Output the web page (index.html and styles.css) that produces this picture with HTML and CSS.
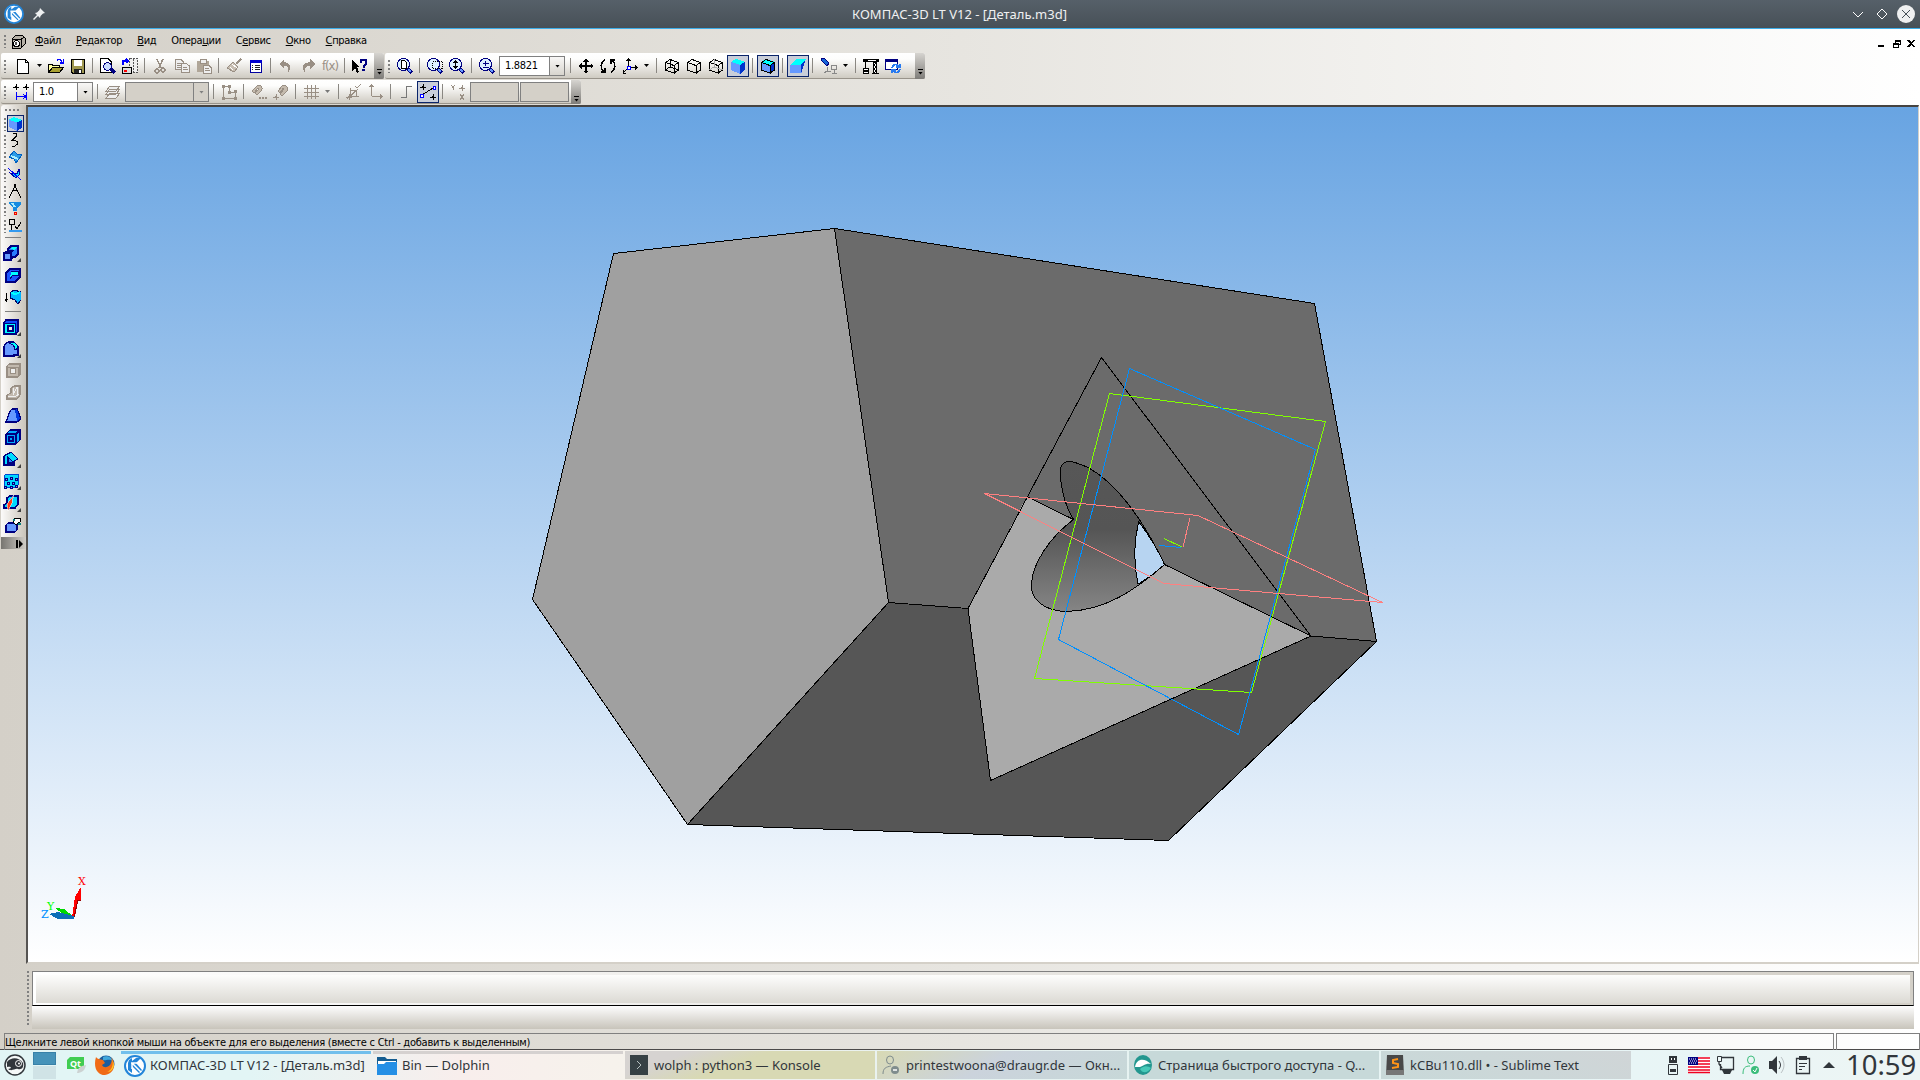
FILE: index.html
```html
<!DOCTYPE html>
<html lang="ru">
<head>
    <meta charset="UTF-8">
    <title>КОМПАС-3D LT V12 - [Деталь.m3d]</title>
    <link rel="stylesheet" href="styles.css">
</head>
<body>
    <svg class="sprite">
        <symbol id="kompas" viewBox="0 0 22 22"><circle cx="11" cy="11" r="10" fill="#fff" stroke="#2385d9" stroke-width="2"/><path d="M5 5L8 3V6L12 3H17L12 8L18 15L15 18L8 11V18L4 15V8Z" fill="#2385d9"/><path d="M7 8H13M8 8V14M8 8L17 17" stroke="#fff" stroke-width="1.500"/></symbol>
        <symbol id="cube" viewBox="0 0 16 16"><path d="M1 4L10 7V16L1 12Z" fill="#6699ff"/><path d="M1 4L6 1L15 4L10 7Z" fill="#00ffff"/><path d="M15 4V12L10 16V7Z" fill="#0033cc"/></symbol>
        <symbol id="lens" viewBox="0 0 16 16"><path d="M10 10L15 15" stroke="#000080" stroke-width="4"/><path d="M11 11L14 14" stroke="#6699ff" stroke-width="2"/><circle cx="6.500" cy="6.500" r="6" fill="#dcf0ff" stroke="#000080" stroke-width="1.200"/></symbol>
        <symbol id="wire" viewBox="0 0 16 16"><path d="M1.5 4.5L10 7.5V15L1.5 12ZM1.5 4.5L6 1.5L14.5 4.5L10 7.5M14.5 4.5V12L10 15" fill="none" stroke="#000" stroke-width="1"/></symbol>
        <symbol id="cross" viewBox="0 0 6 6"><path d="M3 0V6M0 3H6" stroke="currentColor"/><circle cx="3" cy="3" r="1.500" fill="currentColor"/></symbol>
    </svg>

    <div class="titlebar">
        <div class="title-left">
            <svg width="20" height="20"><use href="#kompas"/></svg>
            <svg width="12" height="12" viewBox="0 0 12 12"><path d="M7 0L12 5L10 5.500L7.500 8L7 10L5 8L1 12L0 11L4 7L2 5L4 4.500L6.500 2Z" fill="#eef0f1"/></svg>
        </div>
        <div class="title-text">КОМПАС-3D LT V12 - [Деталь.m3d]</div>
        <div class="title-right">
            <svg width="12" height="18" viewBox="0 0 12 18"><path d="M1 7L6 12L11 7" fill="none" stroke="#fcfcfc"/></svg>
            <svg width="12" height="18" viewBox="0 0 12 18"><path d="M6 4L11 9L6 14L1 9Z" fill="none" stroke="#fcfcfc"/></svg>
            <svg width="18" height="18" viewBox="0 0 18 18"><circle cx="9" cy="9" r="9" fill="#eff0f1"/><path d="M5 5L13 13M13 5L5 13" stroke="#475057"/></svg>
        </div>
    </div>

    <div class="app">
        <div class="menubar">
            <i class="grip"></i>
            <svg class="px" width="15" height="15" viewBox="0 0 15 15"><path d="M1 5L5 1H11L14 4V10L10 14H1Z" fill="#b5b0a6" stroke="#000"/><path d="M1 5H10V14M10 5L14 3" fill="none" stroke="#000"/><circle cx="5.500" cy="9.500" r="3" fill="#fff" stroke="#000"/><path d="M4 8H6V11H4Z" fill="#555"/></svg>
            <div class="menus">
                <span><u>Ф</u>айл</span><span><u>Р</u>едактор</span><span><u>В</u>ид</span><span>Опера<u>ц</u>ии</span><span>С<u>е</u>рвис</span><span><u>О</u>кно</span><span><u>С</u>правка</span>
            </div>
            <svg class="mdi px" width="38" height="10" viewBox="0 0 38 10"><path d="M0 6H6V8H0Z"/><path d="M17.500 1.500H22.500V5.500H17.500ZM15.500 4.500H20.500V8.500H15.500Z" fill="#fff" stroke="#000"/><path d="M17 1H23V3H17ZM15 4H21V6H15Z"/><path d="M30 1L36.500 8M36.500 1L30 8" stroke="#000" stroke-width="1.700"/></svg>
        </div>

        <div class="toolrow">
            <div class="toolbar">
                <i class="grip"></i>
                <b class="btn"><svg viewBox="0 0 16 16"><path d="M2.500 1.500H10.500L13.500 4.500V15.500H2.500Z" fill="#fff" stroke="#000"/><path d="M10.500 1.500V4.500H13.500" fill="none" stroke="#000"/></svg></b>
                <i class="arr"></i>
                <b class="btn"><svg viewBox="0 0 16 16"><path d="M.5 14.500V6.500H4L5 7.500H11.500V9.500" fill="#ffffa0" stroke="#000"/><path d="M.5 14.500L4.500 9.500H15.500L11.500 14.500Z" fill="#a8a030" stroke="#000"/><path d="M9 3C10 1 13 1 14 4M15.500 1V5H12" fill="none" stroke="#0000ff" stroke-width="1.300"/></svg></b>
                <b class="btn"><svg viewBox="0 0 16 16"><path d="M1.500 1.500H14.500V15.500H3L1.500 14Z" fill="#a09850" stroke="#000"/><path d="M4 2H12V8H4Z" fill="#fff"/><path d="M4 11H12V15H4Z" fill="#222"/><path d="M9 12H11V15H9Z" fill="#fff"/></svg></b>
                <i class="sep"></i>
                <b class="btn"><svg viewBox="0 0 16 16"><path d="M.5 .5H8L11.500 4V14.500H.5Z" fill="#fff" stroke="#000"/><path d="M10 10L15 15" stroke="#000080" stroke-width="3"/><circle cx="7.500" cy="8.500" r="3.800" fill="#cdf" stroke="#000080"/></svg></b>
                <b class="btn"><svg viewBox="0 0 16 16"><path d="M7.500 .5H15.500V14H7.500ZM11.500 1V14" fill="#eee" stroke="#555" stroke-dasharray="2 1"/><path d="M1 7V3H6M4 1L6 3L4 5" fill="none" stroke="#0000ff" stroke-width="1.500"/><path d="M.5 9.500H9.500V15.500H.5Z" fill="#ddd" stroke="#000"/><path d="M2 13H5" stroke="red" stroke-width="2"/></svg></b>
                <i class="sep"></i>
                <b class="btn off"><svg viewBox="0 0 16 16"><path d="M5 1L9 10M11 1L7 10" stroke="currentColor" stroke-width="1.500"/><circle cx="5" cy="13" r="2" fill="none" stroke="currentColor" stroke-width="1.500"/><circle cx="11" cy="12" r="2" fill="none" stroke="currentColor" stroke-width="1.500"/></svg></b>
                <b class="btn off"><svg viewBox="0 0 16 16"><path d="M1.500 1.500H7L9.500 4V11.500H1.500ZM3 5H7M3 7H8M3 9H7" fill="#eee" stroke="currentColor"/><path d="M7.500 5.500H12.500L15.500 8V14.500H7.500ZM9 9H13M9 11H14" fill="#eee" stroke="currentColor"/></svg></b>
                <b class="btn off"><svg viewBox="0 0 16 16"><path d="M1 3H13V14H1Z" fill="#b0a698"/><path d="M4 1H10V5H4Z" fill="#eee" stroke="currentColor"/><path d="M7.500 7.500H13L15.500 10V15.500H7.500ZM9 10H13M9 12H14" fill="#eee" stroke="currentColor"/></svg></b>
                <i class="sep"></i>
                <b class="btn off"><svg viewBox="0 0 16 16"><path d="M15 1L10 6" stroke="currentColor" stroke-width="2"/><path d="M7 4L12 9L8 14L1 10Z" fill="#c8beb2" stroke="currentColor"/><path d="M6 6L11 10M4 9L7 12" stroke="#fff"/></svg></b>
                <b class="btn"><svg viewBox="0 0 16 16"><path d="M2.500 2.500H13.500V14.500H2.500Z" fill="#fff" stroke="#0000a0"/><path d="M2 2H14V5H2Z" fill="#0000d0"/><path d="M4 7.500H5M4 9.500H5M4 11.500H5M7 7.500H12M7 9.500H12M7 11.500H12" stroke="#222"/></svg></b>
                <i class="sep"></i>
                <b class="btn off"><svg viewBox="0 0 16 16"><path d="M1 6L6 1V4C12 4 15 9 10 15C11 10 10 8 6 8V11Z" fill="currentColor"/></svg></b>
                <b class="btn off"><svg viewBox="0 0 16 16"><path d="M15 6L10 1V4C4 4 0 9 5 15C4 10 6 8 10 8V11Z" fill="currentColor"/></svg></b>
                <b class="btn off fx">f(x)</b>
                <i class="sep"></i>
                <b class="btn"><svg viewBox="0 0 16 16"><path d="M0 2V13L3 10L5 15L7 14L5 9H8Z"/><path d="M9 5V2H14V6L11.500 8V10" fill="none" stroke="#000080" stroke-width="2"/><path d="M10 11H13V13H10Z" fill="#000080"/></svg></b>
                <i class="more"></i>
            </div>
            <div class="toolbar view">
                <i class="grip"></i>
                <b class="btn"><svg viewBox="0 0 16 16"><use href="#lens"/><path d="M4.500 2.500H7.500L9.500 4.500V10.500H4.500Z" fill="#fff" stroke="#000"/></svg></b>
                <i class="sep"></i>
                <b class="btn"><svg viewBox="0 0 16 16"><use href="#lens"/><path d="M5.500 3.500H15.500V10.500H5.500Z" fill="none" stroke="#000" stroke-dasharray="1 1"/></svg></b>
                <b class="btn"><svg viewBox="0 0 16 16"><use href="#lens"/><path d="M6.500 2L9.500 5H3.500ZM6.500 11L9.500 8H3.500Z"/><path d="M6.500 4V10" stroke="#000" stroke-width="1"/></svg></b>
                <i class="sep"></i>
                <b class="btn"><svg viewBox="0 0 16 16"><use href="#lens"/><path d="M4 5.500H10M6.500 3V8M4 9.500H10" stroke="#000080" stroke-width="1"/></svg></b>
                <div class="combo zoomval"><span>1.8821</span><i></i></div>
                <i class="sep"></i>
                <b class="btn"><svg viewBox="0 0 16 16"><path d="M8 2V14M2 8H14" stroke="#000" stroke-width="1.500"/><path d="M8 0L11 3.500H5ZM8 16L11 12.500H5ZM0 8L3.500 5V11ZM16 8L12.500 5V11Z"/></svg></b>
                <b class="btn"><svg viewBox="0 0 16 16"><path d="M5 2C0 5 0 10 4 14M11 14C16 11 16 6 12 2M1 14H5V10M15 2H11V6" fill="none" stroke="#000" stroke-width="1.500"/></svg></b>
                <b class="btn"><svg viewBox="0 0 16 16"><path d="M6.500 9V1M7 9.500H15M6 10L1 15M4.500 3L6.500 1L8.500 3M13 7.500L15 9.500L13 11.500M1 12V15H4" fill="none" stroke="#000"/><path d="M5 8H8V11H5Z" fill="#fff" stroke="#00f"/></svg></b>
                <i class="arr"></i>
                <i class="sep"></i>
                <b class="btn"><svg viewBox="0 0 16 16"><use href="#wire"/><path d="M6 1V9L1 12M6 9L15 12" fill="none" stroke="#000"/></svg></b>
                <b class="btn"><svg viewBox="0 0 16 16"><use href="#wire"/></svg></b>
                <b class="btn"><svg viewBox="0 0 16 16"><use href="#wire"/><path d="M6 1V9L1 12M6 9L15 12" fill="none" stroke="#aaa"/></svg></b>
                <b class="btn on"><svg viewBox="0 0 16 16"><use href="#cube"/></svg></b>
                <i class="sep"></i>
                <b class="btn on"><svg viewBox="0 0 16 16"><use href="#cube"/><use href="#wire"/></svg></b>
                <i class="sep"></i>
                <b class="btn on"><svg viewBox="0 0 16 16"><path d="M0 7H12V15H0Z" fill="#6699ff"/><path d="M0 7L7 1H16L11 7Z" fill="#00ffff"/><path d="M16 1L11 15V7Z" fill="#0033cc"/></svg></b>
                <i class="sep wide"></i>
                <b class="btn"><svg viewBox="0 0 16 16"><path d="M0 0H3L8 5L6 8L0 2Z" fill="#1565d8" stroke="#000080"/><path d="M6 13L3 15M6 9V13H10M10.500 7.500H15.500V11.500H10.500ZM13 12V15M11 15.500H16" fill="none" stroke="#888"/></svg></b>
                <i class="arr"></i>
                <i class="sep"></i>
                <b class="btn"><svg viewBox="0 0 16 16"><path d="M0 1H16V4H14V15H16V16H9V15H10V4H3V10H2V4H0Z"/><path d="M11 5L13 7L11 9L13 11L11 13L13 15M5 2L7 3L9 2L11 3L13 2" fill="none" stroke="#fff"/><path d="M0 10H6V16H0Z"/><path d="M1 11.500H5M1 14H5" stroke="#fff"/></svg></b>
                <b class="btn"><svg viewBox="0 0 16 16"><path d="M.5 1.500H12.500V11.500H.5Z" fill="#fff" stroke="#000080"/><path d="M0 1H13V4H0Z" fill="#000080"/><path d="M7 10C8 6 12 5 14 9M15 11C14 15 10 16 8 12M15 6V9H11M7 15V12H11" fill="none" stroke="#287af0" stroke-width="1.800"/></svg></b>
                <i class="more"></i>
            </div>
        </div>

        <div class="toolrow second">
            <div class="toolbar state">
                <i class="grip"></i>
                <b class="btn"><svg viewBox="0 0 16 16"><use href="#cross" x="0" y="0" width="6" height="6"/><use href="#cross" x="10" y="0" width="6" height="6"/><path d="M3.500 8V16M13.500 8V16M4 12.500H13M10 10L13 12.500L10 15" fill="none" stroke="#00f"/></svg></b>
                <div class="combo step"><span>1.0</span><i></i></div>
                <i class="sep"></i>
                <b class="btn off"><svg viewBox="0 0 16 16"><path d="M1 14L5 9H15L11 14ZM1 10L5 5H15L11 10ZM1 7L5 2H15L11 7Z" fill="#eee" stroke="currentColor"/></svg></b>
                <div class="combo layer off"><span></span><i></i></div>
                <i class="sep"></i>
                <b class="btn off"><svg viewBox="0 0 16 16"><path d="M2.500 2V14H14.500V8H8.500V2Z" fill="none" stroke="currentColor"/><path d="M1 1H4V4H1ZM7 1H10V4H7ZM13 6H16V9H13ZM1 13H4V16H1ZM13 13H16V16H13ZM7 7H10V10H7Z" fill="currentColor"/></svg></b>
                <i class="sep"></i>
                <b class="btn off"><svg viewBox="0 0 16 16"><path d="M1 7L6 2C9 0 13 3 10 7L6 11L4 9L8 5L7 4L3 9Z" fill="#c5bbae" stroke="currentColor"/><path d="M8 14H10M11 14H13M14 14H16" stroke="currentColor" stroke-width="2"/></svg></b>
                <b class="btn off"><svg viewBox="0 0 16 16"><path d="M5 7L9 2C12 0 17 4 14 7L9 12L7 10L11 5L10 4L7 9Z" fill="#c5bbae" stroke="currentColor"/><use href="#cross" x="0" y="10" width="6" height="6"/></svg></b>
                <i class="sep"></i>
                <b class="btn off"><svg viewBox="0 0 16 16"><path d="M4.500 1V15M8.500 1V15M12.500 1V15M1 4.500H16M1 8.500H16M1 12.500H16" stroke="currentColor"/></svg></b>
                <i class="arr off"></i>
                <i class="sep"></i>
                <b class="btn off"><svg viewBox="0 0 16 16"><path d="M4.500 4V12H13M1 15L12 5M4.500 6.500H10.500V12M9 2L11 4L15 0" fill="none" stroke="currentColor"/><use href="#cross" x="0" y="10" width="6" height="6"/></svg></b>
                <b class="btn off"><svg viewBox="0 0 16 16"><path d="M3.500 12V1M4 12.500H14M1.500 3L3.500 1L5.500 3M12 10.500L14 12.500L12 14.500" fill="none" stroke="currentColor"/></svg></b>
                <i class="sep"></i>
                <b class="btn"><svg viewBox="0 0 16 16"><path d="M3 13.500H8.500V2.500H14" fill="none" stroke="#777"/></svg></b>
                <b class="btn on"><svg viewBox="0 0 16 16"><use href="#cross" x="0" y="0" width="6" height="6"/><use href="#cross" x="10" y="10" width="6" height="6"/><path d="M2 11L13 4" stroke="#000"/><path d="M.5 10.500H3V13H.5ZM13 2.500H15.500V5H13Z" fill="#fff" stroke="#00f"/></svg></b>
                <i class="sep"></i>
                <b class="btn off"><svg viewBox="0 0 16 16"><path d="M1 1L3 3.500L5 1M3 3V6M10 10L14 16M14 10L10 16" fill="none" stroke="currentColor"/><use href="#cross" x="9" y="1" width="6" height="6"/></svg></b>
                <div class="coord"></div><div class="coord"></div>
                <i class="more"></i>
            </div>
        </div>

        <div class="workspace">
            <div class="side">
                <i class="hgrip"></i>
                <div class="page"><i class="grip"></i><b class="on"><svg viewBox="0 0 16 16"><use href="#cube"/></svg></b></div>
                <div class="page"><i class="grip"></i><b><svg viewBox="0 0 16 16"><path d="M6 1.500H9.500V4L5.500 8H7L10.500 9.500V12L7 14.500H5" fill="none" stroke="#000"/></svg></b></div>
                <div class="page"><i class="grip"></i><b><svg viewBox="0 0 16 16"><path d="M2 8L7 2L10 5L15 6L9 14L7 10Z" fill="#2b9ce8" stroke="#0060c0"/><path d="M4 7L11 10" stroke="#aef" stroke-width="2"/></svg></b></div>
                <div class="page"><i class="grip"></i><b><svg viewBox="0 0 16 16"><path d="M3 7L10 8L12 3V9L9 12Z" fill="#00e0ff" stroke="#00a"/><path d="M1 2L14 14" stroke="#00f"/></svg></b></div>
                <div class="page"><i class="grip"></i><b><svg viewBox="0 0 16 16"><path d="M8 3L2 15M8 3L14 15M5 9C7 7 9 7 11 9" fill="none" stroke="#000"/><path d="M7 1H9V5H7Z"/></svg></b></div>
                <div class="page"><i class="grip"></i><b><svg viewBox="0 0 16 16"><path d="M2 2H14V4L10 8V11H6V8L2 4Z" fill="#168be0"/><path d="M5 3L8 7" stroke="#aef" stroke-width="2"/><path d="M7 12H9V14H7Z" fill="#fc3" stroke="#e00"/></svg></b></div>
                <div class="page"><i class="grip"></i><b><svg viewBox="0 0 16 16"><path d="M2.500 2.500H7.500V7.500H2.500ZM4.500 8V13M8 9L10 12L14 5" fill="none" stroke="#000"/><path d="M2 13H15V15H2Z" fill="#39e"/></svg></b></div>
                <i class="hsep"></i>
                <b class="tool sub"><svg viewBox="0 0 16 16"><path d="M5 4L8 1H15V9L12 12H5Z" fill="#2a7cff" stroke="#000080" stroke-width="1.500"/><path d="M7 4L9 2H14L12 5Z" fill="#0ff"/><path d="M1 8H8V15H1ZM1 8L4 6H10L8 8M8 15L11 12" fill="#6699ff" stroke="#000080" stroke-width="1.300"/></svg></b>
                <b class="tool"><svg viewBox="0 0 16 16"><path d="M1 6L5 2H15V10L10 15H1Z" fill="#1d56ff" stroke="#000080" stroke-width="1.500"/><path d="M6 4H13V8H8L5 12" fill="#0ff" stroke="#000080"/></svg></b>
                <b class="tool"><svg viewBox="0 0 16 16"><path d="M1.500 4V12M0 10L1.500 12L3 10" fill="none" stroke="#000"/><path d="M5 4L9 1L16 3V11L13 15L10 11L5 9Z" fill="#00b4ff" stroke="#006"/><path d="M6 4L11 5L15 3" fill="none" stroke="#0ff" stroke-width="2"/></svg></b>
                <i class="hsep"></i>
                <b class="tool sub"><svg viewBox="0 0 16 16"><path d="M1 4L3 1H15V12L13 15H1Z" fill="#0a50ff" stroke="#000080" stroke-width="1.500"/><path d="M1.500 4.500H12.500V14.500H1.500Z" fill="#0ff" stroke="#000080"/><path d="M5 7H10V12H5Z" fill="#eee" stroke="#000080" stroke-width="1.500"/></svg></b>
                <b class="tool sub"><svg viewBox="0 0 16 16"><path d="M1 15V7C1 4 3 1 6 1H10L15 6V14H11V15Z" fill="#6699ff" stroke="#000080" stroke-width="1.500"/><path d="M6 3C10 2 12 6 12 9L15 7C14 3 12 1 9 1Z" fill="#0ff" stroke="#000080"/></svg></b>
                <b class="tool off"><svg viewBox="0 0 16 16"><path d="M2 3L4 1H15V12L13 14H2Z" fill="#c2b9ae" stroke="currentColor" stroke-width="1.300"/><circle cx="8" cy="8" r="3" fill="#eee" stroke="currentColor"/><path d="M3 4H13V14" fill="none" stroke="currentColor"/></svg></b>
                <b class="tool off"><svg viewBox="0 0 16 16"><path d="M2 10L6 8V3L9 1H15V10L12 14H2Z" fill="#c2b9ae" stroke="currentColor" stroke-width="1.300"/><path d="M8 3V10L12 2V9M3 11H11L14 9" fill="none" stroke="#eee"/></svg></b>
                <b class="tool"><svg viewBox="0 0 16 16"><path d="M1 15L5 4L7 2H12L16 12L12 15Z" fill="#6699ff" stroke="#000080" stroke-width="1.300"/><path d="M10 3L12 14L15 12L12 2Z" fill="#0038dd"/></svg></b>
                <b class="tool"><svg viewBox="0 0 16 16"><path d="M1 5L5 1H15V11L11 15H1Z" fill="#0af" stroke="#000080" stroke-width="1.300"/><path d="M1 5H11V15M11 5L15 1M4 8H8V12H4Z" fill="none" stroke="#000080" stroke-width="1.500"/></svg></b>
                <b class="tool sub"><svg viewBox="0 0 16 16"><path d="M1 5L8 1L15 8L11 10V14H1Z" fill="#0df" stroke="#000080" stroke-width="1.300"/><path d="M5 6L11 12H5Z" fill="#258aff" stroke="#000080" stroke-width="1.300"/></svg></b>
                <b class="tool sub"><svg viewBox="0 0 16 16"><path d="M1 3L3 1H15V12L13 14H1Z" fill="#00d8ff" stroke="#0048d0"/><path d="M2 5H4V7H2ZM7 4H9V6H7ZM12 5H14V7H12ZM4 9H6V11H4ZM9 9H11V11H9ZM1 13H3V15H1ZM7 13H9V15H7ZM12 12H14V14H12Z" fill="#6699ff" stroke="#000080"/></svg></b>
                <b class="tool sub"><svg viewBox="0 0 16 16"><path d="M1 10L4 8V3L7 1H15V9L12 13H1Z" fill="#00d8ff" stroke="#000080" stroke-width="1.500"/><path d="M11 0L4 9L5 16L9 8V5Z" fill="#ff3b18" stroke="#fff" stroke-width=".5"/></svg></b>
                <b class="tool"><svg viewBox="0 0 16 16"><path d="M1 8L3 6H12V13L10 15H1Z" fill="#6699ff" stroke="#000080" stroke-width="1.300"/><path d="M8 5L10 1H15V5L11 8Z" fill="#fff" stroke="#000"/><path d="M8 3H10M13 7H16" stroke="#088080" stroke-width="2"/></svg></b>
                <i class="sidemore"><svg width="8" height="8"><path d="M0 0H2V8H0ZM3 0L7 4L3 8Z"/></svg></i>
            </div>

            <div class="viewport">
                <svg viewBox="28 107 1890 855" width="1890" height="855">
                    <defs>
                        <linearGradient id="bore" x1="0" y1="0" x2="0" y2="1"><stop offset="0" stop-color="#575757"/><stop offset=".45" stop-color="#555"/><stop offset="1" stop-color="#858585"/></linearGradient>
                    </defs>
                    <g class="edges" stroke="#000" stroke-linejoin="round">
                        <path d="M613.500 253.500L834.500 228.500L888.500 602.500L687.500 824.500L532.500 599.500Z" fill="#a0a0a0"/>
                        <path d="M834.500 228.500L1314.500 303.500L1376.500 641.500L1311 636L968 608.500L888.500 602.500Z" fill="#6b6b6b"/>
                        <path d="M888.500 602.500L968 608.500L990.500 780.500L1311 636L1376.500 641.500L1168.500 840.500L687.500 824.500Z" fill="#565656"/>
                        <path d="M968 608.500L1026.700 496.500L1073.500 519.500L1164.500 564.500L1311 636L990.500 780.500Z" fill="#aaa" stroke="none"/>
                        <path d="M1073.500 519.500L1164.500 564.500C1143 519 1116 483 1089 468C1070 459 1063 460 1060.500 468C1060 486 1063 502 1073.500 519.500Z" fill="#6b6b6b" stroke="none"/>
                        <path d="M1073.500 519.500C1063 502 1060 486 1060.500 468C1063 460 1070 459 1089 468C1116 483 1143 519 1164.500 564.500C1136 590 1104 611 1066 611.500C1043 611 1030 598 1031.500 584C1032 564 1050 537 1073.500 519.500Z" fill="url(#bore)"/>
                        <path d="M1138.700 521.500C1133 545 1134 566 1138 584C1147 579 1155 573 1164.500 564.500C1157 547 1148 534 1138.700 521.500Z" fill="#b7d4f1"/>
                        <path d="M1026.700 496.500L1073.500 519.500M1164.500 564.500L1311 636L990.500 780.500L968 608.500L1101.500 357.500L1311 636" fill="none"/>
                    </g>
                    <g class="edges" fill="none">
                        <path d="M1109.500 393.500L1325.500 421.500L1251.500 692.500L1034.500 678.500Z" stroke="#80ff00"/>
                        <path d="M1129.500 368.500L1315.500 449.500L1238.500 734.500L1058.500 639.500Z" stroke="#0090ff"/>
                        <path d="M984.500 493.500L1198 515.500L1382.500 602.500L1164 583.500ZM1190 518L1183 547" stroke="#ff8080"/>
                        <path d="M1164 538.500L1182 547" stroke="#80ff00"/>
                        <path d="M1159 545.500L1181 547.500" stroke="#0090ff"/>
                    </g>
                    <g class="triad">
                        <path d="M72 917L75 897L81 887V900L78 900L75 917Z" fill="#f00"/><path d="M74 917L78 900H81" stroke="#900" fill="none"/>
                        <path d="M73 916L62 913L55 908L64 909Z" fill="#00d800"/>
                        <path d="M49 914L58 912L74 916V919L58 919Z" fill="#0d6eb8"/>
                        <text x="78" y="885" fill="#f00">X</text>
                        <text x="47" y="910" fill="#0f0">Y</text>
                        <text x="41" y="918" fill="#0090ff">Z</text>
                    </g>
                </svg>
            </div>
        </div>

        <div class="props">
            <i class="vgrip"></i>
            <div class="props-body">
                <div class="props-main"></div>
                <div class="props-tabs"></div>
            </div>
        </div>

        <div class="statusbar">
            <div class="status-text"><span>Щелкните левой кнопкой мыши на объекте для его выделения (вместе с Ctrl - добавить к выделенным)</span></div>
            <div class="status-box"></div>
        </div>
    </div>

    <div class="taskbar">
        <div class="launchers">
            <svg width="22" height="22" viewBox="0 0 22 22"><circle cx="11" cy="11" r="10" fill="#f5f8f8" stroke="#31363b" stroke-width="1.500"/><path d="M3 8C7 3 15 3 19 9C20 13 18 16 14 15C11 14 8 18 4 15C8 15 8 12 3 13Z" fill="#31363b"/><circle cx="14.500" cy="9.500" r="3" fill="none" stroke="#fff"/><circle cx="15" cy="9.500" r="1" fill="#fff"/></svg>
            <div class="pager"><i></i><i></i></div>
            <div class="qt"><svg width="19" height="18" viewBox="0 0 19 18"><path d="M3 1H17V13H0V4Z" fill="#41cd52"/><text x="3" y="11">Qt</text><path d="M10 17C11 11 14 10 19 9C18 15 14 17 10 17Z" fill="#ccd2d2"/></svg></div>
            <svg width="20" height="20" viewBox="0 0 20 20"><circle cx="11" cy="9" r="8.500" fill="#1c5d9d"/><path d="M8 2C11 0 17 2 18 6C13 3 11 6 8 5Z" fill="#40a8dc"/><path d="M1 2C2 4 5 4 8 5L10 8L7 10C9 14 15 12 16 8C17 5 17 4 16 2C22 9 19 19 10 20C2 20-2 12 1 2Z" fill="#f06b16"/><path d="M17 5C19 9 17 15 12 17C18 17 21 10 17 5Z" fill="#ffc928"/></svg>
        </div>
        <div class="tasks">
            <div class="task active"><svg width="22" height="22"><use href="#kompas"/></svg><span>КОМПАС-3D LT V12 - [Деталь.m3d]</span></div>
            <div class="task dolphin"><svg width="20" height="20" viewBox="0 0 20 20"><path d="M0 1H8L10 3H20V8H0Z" fill="#165d91"/><path d="M1 5H19V9H1Z" fill="#fff"/><path d="M0 8H7L9 6H20V19H0Z" fill="#258fe5"/></svg><span>Bin — Dolphin</span></div>
            <div class="task konsole"><svg width="18" height="20" viewBox="0 0 18 20"><path d="M0 0H18V20H0Z" fill="#374145"/><path d="M7 6L11 10L7 14" fill="none" stroke="#b6c0c0"/></svg><span>wolph : python3 — Konsole</span></div>
            <div class="task chat"><svg width="18" height="20" viewBox="0 0 18 20"><path d="M1 19C1 13 4 12 9 11" fill="none" stroke="#7f8c8d"/><ellipse cx="8" cy="5" rx="3.500" ry="4" fill="none" stroke="#7f8c8d"/><circle cx="13" cy="15" r="4" fill="#7f8c8d"/><path d="M11 15H15" stroke="#fff" stroke-width="1.500"/></svg><span>printestwoona@draugr.de — Окн...</span></div>
            <div class="task browser"><svg width="18" height="20" viewBox="0 0 18 20"><ellipse cx="9" cy="10" rx="9" ry="10" fill="#23978f"/><path d="M1 12C2 4 10 2 17 9C11 8 10 11 6 12Z" fill="#fff"/><path d="M6 14C10 10 14 11 17 13C13 19 8 18 6 14Z" fill="#46c9b8"/></svg><span>Страница быстрого доступа - Q...</span></div>
            <div class="task sublime"><svg width="18" height="20" viewBox="0 0 18 20"><path d="M1 0H17L18 20H0Z" fill="#494949"/><path d="M0 15H18V20H0Z" fill="#777"/><path d="M12 4L7 5V8L12 9V12L6 13" fill="none" stroke="#ff9418" stroke-width="2"/></svg><span>kCBu110.dll • - Sublime Text</span></div>
        </div>
        <div class="tray">
            <svg width="22" height="22" viewBox="0 0 22 22"><path d="M7 2H15V9H7Z" fill="#31363b"/><path d="M9 4H10V6H9ZM12 4H13V6H12Z" fill="#fff"/><path d="M6.500 10.500H15.500V20.500H6.500Z" fill="none" stroke="#31363b"/><path d="M8 15H14V18H8Z" fill="#31363b"/></svg>
            <svg width="22" height="22" viewBox="0 0 22 22"><path d="M0 3H22V19H0Z" fill="#fff"/><path d="M0 4H22M0 7H22M0 10H22M0 13H22M0 16H22M0 18.500H22" stroke="#f00020" stroke-width="1.300"/><path d="M0 3H10V11H0Z" fill="#000080"/><path d="M1 5H9M2 7H9M1 9H9" stroke="#fff" stroke-dasharray="1 1"/></svg>
            <svg width="22" height="22" viewBox="0 0 22 22"><path d="M7 3.500H19.500V15.500H6.500V10M5 5V10L8 14" fill="none" stroke="#31363b" stroke-width="1.300"/><path d="M3.500 2.500H7.500V7.500H3.500Z" fill="#eff8f8" stroke="#31363b"/><path d="M8 16H18L16 20H10Z" fill="#31363b"/></svg>
            <svg width="22" height="22" viewBox="0 0 22 22"><path d="M3 20C3 14 5 12 10 12" fill="none" stroke="#3bbd7b"/><ellipse cx="11" cy="6" rx="3.500" ry="4" fill="none" stroke="#3bbd7b"/><circle cx="15" cy="16" r="4" fill="#3bbd7b"/><path d="M13 16L15 18L17 14" fill="none" stroke="#fff"/></svg>
            <svg width="22" height="22" viewBox="0 0 22 22"><path d="M3 7H6L11 2V20L6 15H3Z" fill="#31363b"/><path d="M13 7C15 10 15 12 13 15" fill="none" stroke="#31363b"/><path d="M15 3C19 8 19 14 15 19" fill="none" stroke="#bbc2c4"/></svg>
            <svg width="22" height="22" viewBox="0 0 22 22"><path d="M4.500 4.500H17.500V19.500H4.500Z" fill="none" stroke="#31363b" stroke-width="1.300"/><path d="M7 2H15V6H7Z" fill="#31363b"/><path d="M7 9.500H15M7 12.500H13M7 15.500H10" stroke="#31363b"/></svg>
            <svg width="22" height="22" viewBox="0 0 22 22"><path d="M5 14L11 8L17 14Z" fill="#31363b"/></svg>
        </div>
        <div class="clock">10:59</div>
    </div>
</body>
</html>
```

FILE: styles.css
```css
* {
    box-sizing: border-box;
}
body {
    margin: 0;
    width: 1920px;
    height: 1080px;
    overflow: hidden;
    display: flex;
    flex-direction: column;
    font-family: "DejaVu Sans Condensed", "DejaVu Sans", sans-serif;
    font-size: 11px;
    color: #000;
}
i, b {
    display: block;
    font-style: normal;
    font-weight: normal;
    flex: none;
}
svg {
    display: block;
    flex: none;
}
.sprite {
    position: absolute;
    width: 0;
    height: 0;
}
.px {
    shape-rendering: crispEdges;
}

/* window title */
.titlebar {
    flex: none;
    height: 29px;
    display: grid;
    grid-template-columns: 1fr auto 1fr;
    align-items: center;
    background: linear-gradient(#566069, #475057);
    border-bottom: 1px solid #3daee9;
}
.title-left {
    display: flex;
    align-items: center;
    gap: 9px;
    padding-left: 4px;
}
.title-text {
    font: 13px/28px "Noto Sans", sans-serif;
    color: #eff0f1;
    white-space: nowrap;
    padding-right: 1px;
}
.title-right {
    display: flex;
    justify-content: flex-end;
    gap: 12px;
    padding-right: 5px;
}
.title-right svg:nth-child(2) {
    margin-right: -3px;
}

.app {
    flex: none;
    height: 1021px;
    display: flex;
    flex-direction: column;
    background: linear-gradient(90deg, #d4d0c8, #e7e5e0 50%, #fff);
    border-bottom: 1px solid #4c4a4a;
}
.menubar {
    flex: none;
    height: 24px;
    display: flex;
    align-items: center;
    padding: 0 13px 0 1px;
}
.menus {
    display: flex;
    flex: 1;
    gap: 15px;
    padding-left: 9px;
    line-height: 14px;
    letter-spacing: -0.35px;
}
.menus u {
    text-underline-offset: 1px;
}
.mdi {
    width: 38px;
    margin: 6px -9px 0 0;
}

/* toolbars */
.toolrow {
    flex: none;
    height: 27px;
    display: flex;
    gap: 1px;
    padding-left: 1px;
}
.toolrow.second {
    height: 25px;
}
.toolbar {
    height: 26px;
    display: flex;
    align-items: center;
    background: linear-gradient(#fff, #fdfdfc 25%, #cfcbc2);
    border-bottom: 1px solid #99948b;
    border-radius: 2px;
}
.second .toolbar {
    height: 24px;
}
.grip {
    width: 11px;
    height: 14px;
    background: radial-gradient(circle at 1px 1px, #808080 1px, transparent 1.2px) 3px 1px / 12px 4px repeat-y;
}
.view .grip, .state .grip {
    width: 9px;
}
.menubar .grip {
    width: 10px;
}
.btn {
    width: 22px;
    height: 22px;
    padding: 3px;
}
.btn svg, .tool svg, .page svg {
    width: 16px;
    height: 16px;
    shape-rendering: crispEdges;
}
.btn.on, .page .on {
    padding: 2px;
    border: 1px solid #0a246a;
    background: #c9ced9;
}
.off {
    color: #998f84;
}
.fx {
    padding: 3px 0 0;
    font: 13px/15px "DejaVu Sans Condensed", sans-serif;
    letter-spacing: -1px;
    text-align: center;
}
.sep {
    width: 8px;
    height: 15px;
    background: linear-gradient(#8a8782, #8a8782) 3px 0 / 1px 100% no-repeat;
}
.sep.wide {
    width: 9px;
}
.arr {
    width: 11px;
    height: 3px;
    background: #000;
    clip-path: polygon(3px 0, 8px 0, 5.5px 3px);
}
.arr.off {
    width: 13px;
    background: #777;
}
.view .arr {
    width: 12px;
}
.more {
    width: 10px;
    height: 26px;
    margin-left: auto;
    background: linear-gradient(#d6d4d0, #7e7c78);
    border-radius: 0 2px 2px 0;
}
.more::before {
    content: "";
    display: block;
    width: 5px;
    height: 6px;
    margin: 16px 0 0 3px;
    background: linear-gradient(#000 0 1px, transparent 1px 3px, #000 3px);
    clip-path: polygon(0 0, 100% 0, 100% 50%, 50% 100%, 0 50%);
}
.second .more {
    height: 24px;
}
.toolbar:first-child {
    width: 383px;
}
.toolbar.view {
    width: 540px;
}
.toolbar.state {
    width: 580px;
}
.combo {
    height: 20px;
    display: flex;
    border: 1px solid #808080;
    background: #fff;
    font: 11px/18px "DejaVu Sans Condensed", sans-serif;
    letter-spacing: -0.3px;
}
.combo span {
    flex: 1;
    padding-left: 5px;
}
.combo i {
    width: 15px;
    border-left: 1px solid #808080;
    background: linear-gradient(#f8f7f6, #d8d5ce);
}
.combo i::before {
    content: "";
    display: block;
    width: 5px;
    height: 3px;
    margin: 8px 0 0 5px;
    background: #000;
    clip-path: polygon(0 0, 100% 0, 50% 100%);
}
.combo.off, .combo.off i {
    background: #d4d0c8;
}
.combo.off i::before {
    background: #808080;
}
.zoomval {
    width: 66px;
    margin: 0 2px 0 1px;
}
.step {
    width: 60px;
    margin: 0 1px;
}
.layer {
    width: 84px;
    margin: 0 1px;
}
.coord {
    width: 49px;
    height: 20px;
    margin-left: 1px;
    border: 1px solid #808080;
    background: #d4d0c8;
}

/* left palette and model view */
.workspace {
    flex: none;
    height: 859px;
    display: flex;
    padding-right: 1px;
}
.side {
    width: 25px;
    height: 444px;
    margin-left: 1px;
    display: flex;
    flex-direction: column;
    background: linear-gradient(90deg, #fcfbfa, #c9c4ba);
    border-radius: 3px;
}
.hgrip {
    width: 16px;
    height: 2px;
    margin: 4px 0 4px 4px;
    background: repeating-linear-gradient(90deg, #808080 0 2px, transparent 2px 4px);
}
.page {
    flex: none;
    height: 17px;
    display: flex;
    align-items: center;
}
.page .grip {
    width: 6px;
}
.page b {
    width: 17px;
    height: 17px;
}
.page .on {
    padding: 0;
}
.page .on svg {
    width: 15px;
    height: 15px;
}
.hsep {
    width: 16px;
    height: 1px;
    margin: 3px 0 4px 4px;
    background: #808080;
}
.tool {
    position: relative;
    height: 22px;
    padding: 3px 0 3px 3px;
}
.tool:not(.sub) {
    padding-left: 4px;
}
.tool.sub svg {
    margin-left: -1px;
}
.tool.sub::after {
    content: "";
    position: absolute;
    left: 16px;
    bottom: 2px;
    width: 4px;
    height: 4px;
    background: #404040;
    clip-path: polygon(100% 0, 100% 100%, 0 100%);
}
.sidemore {
    margin-top: auto;
    height: 12px;
    padding: 3px 0 0 15px;
    background: linear-gradient(90deg, #777570, #d0cdc7);
}
.viewport {
    width: 1893px;
    height: 859px;
    border: 2px solid;
    border-color: #454341 #d4d0c8 #d4d0c8 #565452;
    border-right-width: 1px;
    background: linear-gradient(#68a4e2, #fff);
}
.edges {
    shape-rendering: crispEdges;
}
.triad {
    font: 11px "DejaVu Serif", serif;
    shape-rendering: crispEdges;
}

/* property panel */
.props {
    flex: none;
    height: 69px;
    display: flex;
    padding: 7px 6px 3px 27px;
}
.vgrip {
    width: 2px;
    height: 55px;
    margin-right: 3px;
    background: repeating-linear-gradient(#808080 0 2px, transparent 2px 4px);
}
.props-body {
    flex: 1;
}
.props-main {
    height: 35px;
    border: 1px solid #808080;
    border-bottom-color: #000;
    background: linear-gradient(#fdfdfc, #dcdad4) 3px 3px / calc(100% - 6px) calc(100% - 5px) no-repeat, linear-gradient(90deg, #fff, #d4d0c8);
}
.props-tabs {
    height: 23px;
    background: linear-gradient(#fdfdfd, #c8c4bb);
}
.statusbar {
    flex: none;
    height: 17px;
    display: flex;
    gap: 2px;
    padding: 0 0 0 4px;
}
.status-text, .status-box {
    border: 1px solid #808080;
    border-bottom: none;
    line-height: 17px;
    white-space: nowrap;
}
.status-text {
    width: 1830px;
    letter-spacing: -0.25px;
}
.status-box {
    width: 84px;
}

/* desktop panel */
.taskbar {
    flex: none;
    height: 30px;
    display: flex;
    background: linear-gradient(90deg, #e2f5f5, #e2f5f5 13%, #f8eeec 24%, #f6f2ec 32%, #e6f2f0 50%, #e8f5f6 85%, #edf5f4);
    font-family: "Noto Sans", sans-serif;
    color: #31363b;
}
.launchers {
    width: 121px;
    flex: none;
    display: flex;
    align-items: center;
    padding-left: 4px;
}
.pager {
    width: 23px;
    margin: 0 11px 0 7px;
}
.pager i {
    height: 13px;
    background: #d0e3e6;
}
.pager i:first-child {
    background: #4693b9;
    border: 1px solid #3881a8;
    margin-bottom: 1px;
}
.qt {
    width: 28px;
}
.qt text {
    font: bold 9px "Noto Sans", sans-serif;
    fill: #fff;
}
.tasks {
    display: flex;
    gap: 2px;
}
.task {
    width: 250px;
    height: 28px;
    margin-top: 1px;
    display: flex;
    align-items: center;
    gap: 5px;
    padding-left: 4px;
    border-top: 3px solid transparent;
    font-size: 13px;
    white-space: nowrap;
}
.task svg {
    margin-top: -2px;
}
.task span {
    margin-top: -3px;
}
.task.active {
    padding-left: 3px;
    gap: 4px;
    border-top-color: #71bfec;
}
.dolphin {
    border-top-color: #d5d1d0;
}
.konsole, .chat, .browser, .sublime {
    border-top: none;
    padding-left: 5px;
    gap: 6px;
}
.konsole svg, .chat svg, .browser svg, .sublime svg,
.konsole span, .chat span, .browser span, .sublime span {
    margin-top: 0;
}
.konsole {
    background: linear-gradient(160deg, #d6d3d1 20%, #d8d9b4 45%);
}
.chat {
    background: linear-gradient(150deg, #d8d9b4, #cbd3dc 45%, #c7d8d8);
}
.browser {
    background: #c7d9d9;
}
.sublime {
    background: linear-gradient(20deg, #c8d9d9, #d0d5d7);
}
.tray {
    display: flex;
    align-items: center;
    gap: 4px;
    margin-left: 31px;
}
.clock {
    margin-left: 6px;
    font-size: 27.5px;
    line-height: 30px;
}
```
